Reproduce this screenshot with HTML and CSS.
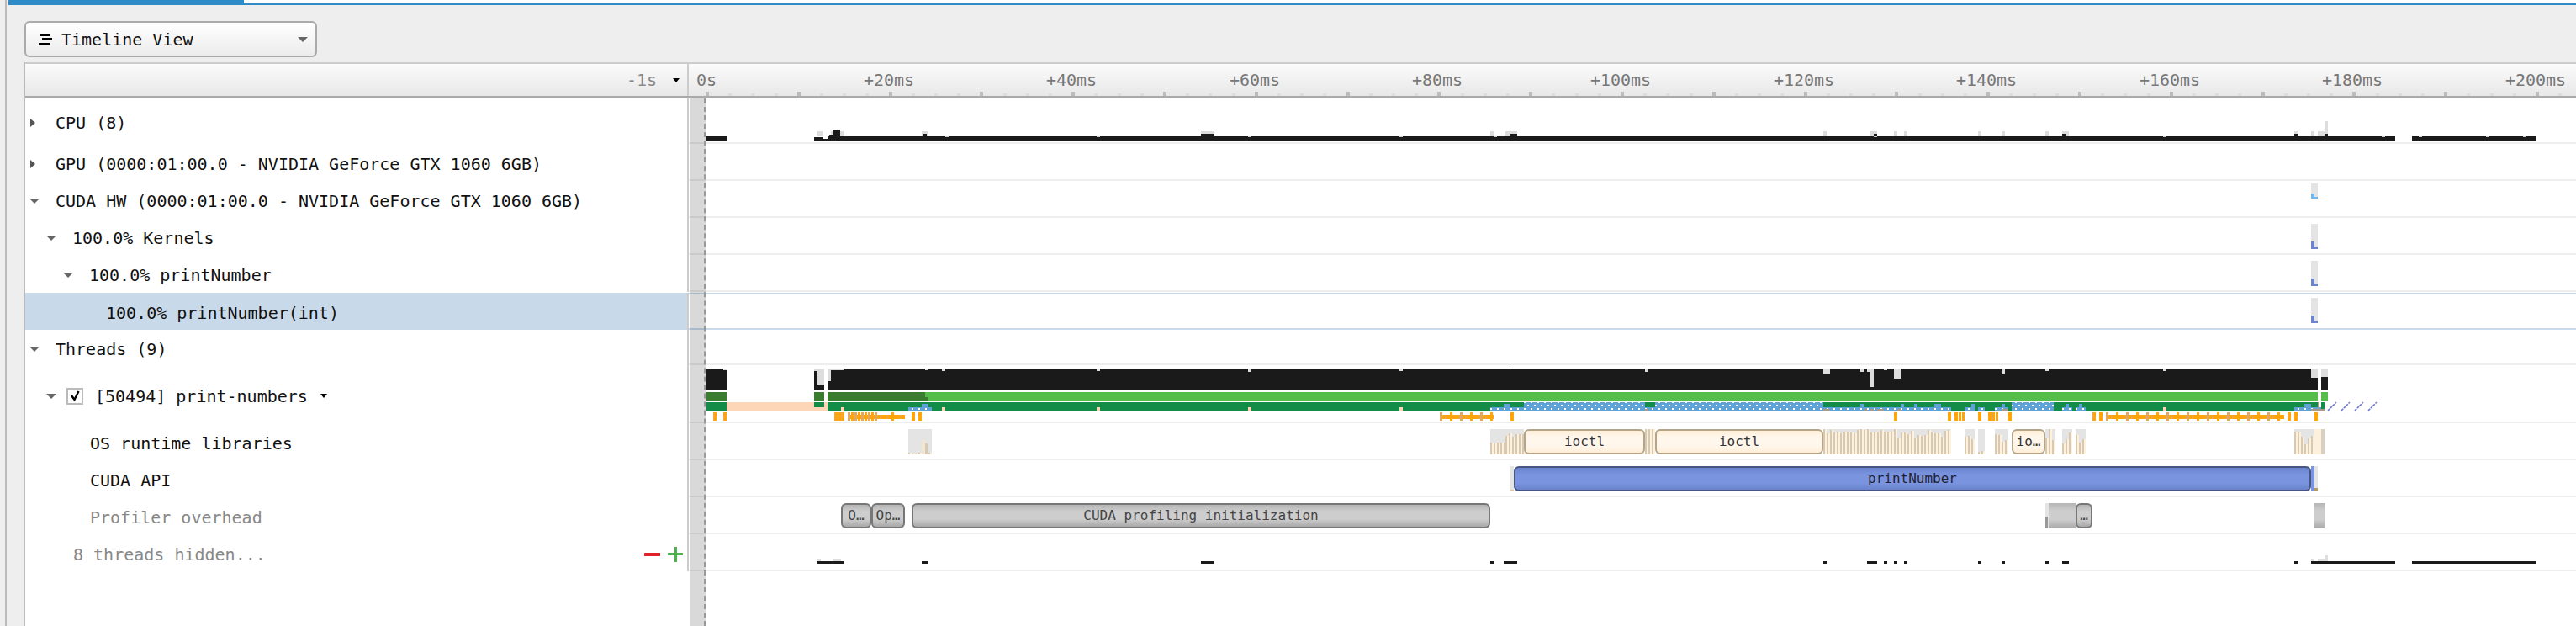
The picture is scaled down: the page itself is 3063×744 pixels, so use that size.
FILE: index.html
```html
<!DOCTYPE html>
<html lang="en">
  <head>
    <meta charset="UTF-8" />
    <title>Timeline View</title>
    <link rel="stylesheet" href="styles.css">
  </head>
  <body>
    <div class="app">
      <div class="progress"><div class="progress-fill"></div></div>

      <div class="toolbar">
        <button class="view-select">
          <svg class="view-icon" width="16" height="14" viewBox="0 0 16 14">
            <rect x="2" y="0" width="12" height="3" />
            <rect x="4" y="5" width="12" height="3" />
            <rect x="0" y="11" width="14" height="3" />
          </svg>
          <span>Timeline View</span>
          <i class="select-caret"></i>
        </button>
      </div>

      <div class="panel">
        <div class="panel-head">
          <div class="corner">
            <span>-1s</span>
            <i class="mini-caret"></i>
          </div>
          <div class="ruler" id="ruler"></div>
        </div>

        <div class="rows">
          <svg class="tracks" id="tracks" viewBox="819 117 2244 627" width="2244" height="627" shape-rendering="crispEdges">
            <defs>
              <pattern id="dots" width="8" height="8" patternUnits="userSpaceOnUse">
                <rect width="8" height="8" fill="#5fa3d6" />
                <rect x="0" y="1" width="2" height="2" fill="#fff" />
                <rect x="4" y="5" width="2" height="2" fill="#fff" />
              </pattern>
            </defs>
          </svg>

          <div class="row row-cpu">
            <div class="label lvl-0"><i class="caret-right"></i>CPU (8)</div>
            <div class="track"></div>
          </div>
          <div class="row">
            <div class="label lvl-0"><i class="caret-right"></i>GPU (0000:01:00.0 - NVIDIA GeForce GTX 1060 6GB)</div>
            <div class="track"></div>
          </div>
          <div class="row">
            <div class="label lvl-0"><i class="caret-down"></i>CUDA HW (0000:01:00.0 - NVIDIA GeForce GTX 1060 6GB)</div>
            <div class="track"></div>
          </div>
          <div class="row">
            <div class="label lvl-1"><i class="caret-down"></i>100.0% Kernels</div>
            <div class="track"></div>
          </div>
          <div class="row">
            <div class="label lvl-2"><i class="caret-down"></i>100.0% printNumber</div>
            <div class="track"></div>
          </div>
          <div class="row row-selected">
            <div class="label lvl-3">100.0% printNumber(int)</div>
            <div class="track"></div>
          </div>
          <div class="row row-threads">
            <div class="label lvl-0"><i class="caret-down"></i>Threads (9)</div>
            <div class="track"></div>
          </div>
          <div class="row row-thread">
            <div class="label lvl-1">
              <i class="caret-down"></i>
              <span class="checkbox">
                <svg width="15" height="15" viewBox="0 0 15 15"><path d="M3 7 L6.5 12 L11.5 2" fill="none" stroke="#000" stroke-width="2.4" /></svg>
              </span>
              <span>[50494] print-numbers</span>
              <i class="mini-caret thread-caret"></i>
            </div>
            <div class="track"></div>
          </div>
          <div class="row">
            <div class="label lvl-sub">OS runtime libraries</div>
            <div class="track" id="osTrack"></div>
          </div>
          <div class="row">
            <div class="label lvl-sub">CUDA API</div>
            <div class="track" id="apiTrack"></div>
          </div>
          <div class="row">
            <div class="label lvl-sub muted">Profiler overhead</div>
            <div class="track" id="profTrack"></div>
          </div>
          <div class="row">
            <div class="label lvl-hidden muted">
              <span>8 threads hidden...</span>
              <span class="hidden-btns">
                <svg width="19" height="4" viewBox="0 0 19 4"><rect width="19" height="4" fill="#e2222c" /></svg>
                <svg width="18" height="18" viewBox="0 0 18 18"><path d="M8 0h3v7h7v3h-7v8h-3v-8h-8v-3h8z" fill="#4cb34c" /></svg>
              </span>
            </div>
            <div class="track"></div>
          </div>
          <div class="zero-strip"></div>
        </div>
      </div>
    </div>
    <script src="script.js"></script>
  </body>
</html>
```

FILE: styles.css
```css
* {
  margin: 0;
  padding: 0;
  box-sizing: border-box;
}

body {
  font-family: "DejaVu Sans Mono", "Liberation Mono", monospace;
  font-size: 20px;
  color: #111;
  background: #eee;
  height: 744px;
  overflow: hidden;
}

.app {
  margin-left: 6px;
  height: 744px;
  border-left: 2px solid #bbb;
  display: flex;
  flex-direction: column;
}

.progress {
  height: 6px;
  margin-left: 2px;
  background: #fff;
  border-bottom: 2px solid #2e8bc7;
}

.progress-fill {
  width: 280px;
  height: 6px;
  background: #2e8bc7;
}

.toolbar {
  height: 68px;
  padding: 19px 0 0 21px;
}

.view-select {
  width: 348px;
  height: 43px;
  display: flex;
  align-items: center;
  padding-left: 15px;
  border: 2px solid #aaa;
  border-radius: 6px;
  background: linear-gradient(#fff, #ececec);
  font: inherit;
  color: #111;
}

.view-icon {
  margin-right: 11px;
  fill: #000;
}

.select-caret {
  width: 0;
  height: 0;
  margin-left: auto;
  margin-right: 9px;
  border-left: 6px solid transparent;
  border-right: 6px solid transparent;
  border-top: 6px solid #666;
}

.panel {
  flex: 1;
  margin-left: 21px;
  background: #fff;
  border-left: 1px solid #bbb;
  display: flex;
  flex-direction: column;
  overflow: hidden;
}

.panel-head {
  display: flex;
  height: 43px;
  border-top: 2px solid #ccc;
  border-bottom: 3px solid #aaa;
  background: linear-gradient(#fbfbfb, #e8e8e8);
}

.corner {
  width: 789px;
  border-right: 2px solid #ccc;
  display: flex;
  align-items: center;
  justify-content: flex-end;
  gap: 19px;
  padding-right: 9px;
  color: #888;
}

.ruler {
  flex: 1;
  position: relative;
}

.ruler-label {
  position: absolute;
  top: 7px;
  color: #777;
  transform: translateX(-50%);
}

.tick {
  position: absolute;
  bottom: 0;
  width: 4px;
  height: 3px;
  background: #ddd;
}

.tick-major {
  height: 5px;
  background: #bbb;
}

.rows {
  flex: 1;
  position: relative;
}

.tracks {
  position: absolute;
  top: 0;
  left: 789px;
}

.row {
  display: flex;
  height: 44px;
}

.row-cpu {
  height: 54px;
}

.row-selected {
  height: 45px;
  padding-top: 1px;
}

.row-threads {
  height: 42px;
}

.row-thread {
  height: 69px;
}

.label {
  width: 789px;
  flex-shrink: 0;
  display: flex;
  align-items: center;
  padding-top: 4px;
  border-right: 2px solid #ccc;
  white-space: nowrap;
  position: relative;
}

.lvl-0 { padding-left: 36px; }
.lvl-1 { padding-left: 56px; }
.lvl-2 { padding-left: 76px; }
.lvl-3 { padding-left: 96px; }
.lvl-sub { padding-left: 77px; }
.lvl-hidden { padding-left: 57px; justify-content: space-between; padding-right: 5px; }

.muted {
  color: #888;
}

.row-selected .label {
  background: #c8daea;
}

.track {
  flex: 1;
  position: relative;
  border-bottom: 2px solid #eee;
}

.row-selected .track {
  border-top: 2px solid #c8daea;
  border-bottom: 2px solid #c8daea;
}

.caret-right,
.caret-down {
  position: absolute;
  width: 0;
  height: 0;
}

.caret-right {
  margin-left: -30px;
  border-top: 5px solid transparent;
  border-bottom: 5px solid transparent;
  border-left: 6px solid #555;
}

.caret-down {
  margin-left: -31px;
  border-left: 6px solid transparent;
  border-right: 6px solid transparent;
  border-top: 6px solid #666;
}

.mini-caret {
  width: 0;
  height: 0;
  border-left: 4px solid transparent;
  border-right: 4px solid transparent;
  border-top: 5px solid #000;
}

.checkbox {
  width: 20px;
  height: 20px;
  margin-left: -7px;
  margin-right: 14px;
  border: 2px solid #bbb;
  background: #fff;
  display: flex;
  align-items: center;
  justify-content: center;
}

.thread-caret {
  margin-left: 15px;
}

.hidden-btns {
  display: flex;
  align-items: center;
  gap: 9px;
}

.zero-strip {
  position: absolute;
  top: 0;
  bottom: 0;
  left: 791px;
  width: 18px;
  background: rgba(0, 0, 0, 0.15);
  border-right: 2px dashed #999;
}

.box {
  position: absolute;
  top: 7px;
  height: 30px;
  border: 2px solid;
  border-radius: 6px;
  font-size: 16px;
  line-height: 25px;
  text-align: center;
  white-space: pre;
  overflow: hidden;
}

.box-plain {
  border: 0;
  border-radius: 0;
}

.box-os {
  border-color: #b3a48a;
  color: #333;
  background: linear-gradient(#ffeed6, #fff7ec 30%, #fff7ec 70%, #ffeed6);
}

.box-api {
  border-color: #475580;
  color: #223;
  background: linear-gradient(#6a82cc, #7a94df 30%, #7a94df 70%, #6a82cc);
}

.box-prof {
  border-color: #777;
  color: #444;
  background: linear-gradient(#b5b5b5, #cdcdcd 30%, #cdcdcd 65%, #a8a8a8);
}
```

FILE: script.js
```js
// timeline drawing, all x and y values are page pixels
const NS = "http://www.w3.org/2000/svg";
const svg = document.getElementById("tracks");
const START = 819;
const ZERO = 841;
const PER_MS = 10.88;

function rect(x, y, w, h, fill) {
  const r = document.createElementNS(NS, "rect");
  r.setAttribute("x", x);
  r.setAttribute("y", y);
  r.setAttribute("width", w);
  r.setAttribute("height", h);
  r.setAttribute("fill", fill);
  svg.appendChild(r);
}

function spans(list, y, h, fill) {
  list.forEach(([a, b]) => rect(a, y, b - a, h, fill));
}

function rnd(x) {
  return Math.abs(Math.sin(x * 12.9898) * 43758.5453) % 1;
}

// ruler
const ruler = document.getElementById("ruler");
for (let ms = 0; ms <= 205; ms += 2.5) {
  const t = document.createElement("div");
  t.className = ms % 10 === 0 ? "tick tick-major" : "tick";
  t.style.left = Math.round(ZERO + ms * PER_MS - 2 - START) + "px";
  ruler.appendChild(t);
}
for (let ms = 0; ms <= 200; ms += 20) {
  const l = document.createElement("div");
  l.className = "ruler-label";
  l.textContent = ms === 0 ? "0s" : "+" + ms + "ms";
  l.style.left = (ms === 0 ? 21 : Math.round(ZERO + ms * PER_MS - 2 - START)) + "px";
  ruler.appendChild(l);
}

// CPU row
const BLACK = "#1a1a1a";
const GREY = "#ddd";
spans([[972, 978], [988, 996], [999, 1003], [1096, 1104], [1428, 1444], [1772, 1776], [1789, 1804],
  [2168, 2172], [2224, 2232], [2252, 2256], [2264, 2268], [2352, 2356], [2380, 2384], [2432, 2436],
  [2452, 2460], [2728, 2732], [2748, 2752], [2756, 2764]], 156, 6, GREY);
rect(2764, 144, 4, 18, GREY);
spans([[840, 864], [968, 2848], [2868, 3016]], 162, 6, BLACK);
rect(968, 162, 10, 1, "#fff");
rect(978, 162, 7, 3, "#fff");
rect(990, 154, 9, 8, BLACK);
rect(986, 160, 4, 2, BLACK);
spans([[1098, 1102], [1428, 1444], [1796, 1804], [2228, 2232], [2452, 2456], [2728, 2732], [2764, 2768]], 159, 3, BLACK);
[1124, 1304, 1484, 1664, 1776, 2228, 2572, 2832, 2876, 2956, 3000].forEach((x) => rect(x, 162, 4, 1, "#ccc"));

// CUDA HW rows, one small sample near the end
rect(2748, 218, 8, 18, "#e4e4e4");
rect(2748, 230, 4, 6, "#72b6ee");
rect(2752, 234, 4, 2, "#72b6ee");
[266, 310, 354].forEach((y) => {
  rect(2748, y, 8, 30, "#e4e4e4");
  rect(2748, y + 21, 4, 9, "#6e84c8");
  rect(2752, y + 27, 4, 3, "#6e84c8");
});

// thread activity graph
spans([[840, 864], [968, 980], [984, 2756], [2760, 2768]], 438, 26, BLACK);
[[860, 4, 2], [840, 4, 1], [968, 12, 3], [972, 8, 19], [984, 4, 15], [988, 16, 2], [1100, 4, 2], [1120, 4, 3],
  [1304, 4, 3], [1484, 4, 4], [1664, 4, 3], [1792, 4, 1], [1956, 4, 4], [2168, 8, 6], [2212, 4, 4],
  [2220, 8, 4], [2224, 4, 22], [2240, 4, 2], [2252, 8, 12], [2380, 4, 7], [2432, 4, 3], [2572, 4, 3],
  [2748, 8, 11], [2760, 8, 10]].forEach(([x, w, h]) => rect(x, 438, w, h, GREY));

spans([[840, 864], [968, 980], [984, 1100]], 466, 10, "#3a7d2e");
spans([[1100, 2756], [2760, 2768]], 466, 10, "#55bd4a");
rect(1100, 472, 4, 4, "#3a7d2e");

// running state strip
const PEACH = "#fdd6b8";
rect(864, 478, 128, 10, PEACH);
spans([[840, 864], [984, 2756], [2760, 2764]], 478, 10, "#128c46");
rect(968, 478, 12, 6, "#128c46");
rect(984, 478, 8, 6, "#128c46");
spans([[1000, 1004], [1120, 1124], [1304, 1308], [1484, 1488], [1664, 1668], [1796, 1800], [2572, 2576], [2256, 2268]], 484, 4, PEACH);
spans([[1812, 1956], [1968, 2168], [2392, 2442]], 478, 10, "url(#dots)");
spans([[1080, 1108], [1772, 1812], [1956, 1968], [2168, 2320], [2336, 2348], [2352, 2360], [2372, 2388], [2452, 2464], [2468, 2480], [2728, 2760]], 484, 4, "url(#dots)");
spans([[1096, 1104], [1788, 1796], [2212, 2216], [2260, 2264], [2276, 2280], [2300, 2308], [2344, 2348], [2380, 2384], [2456, 2460], [2472, 2476], [2740, 2748]], 480, 4, "#5fa3d6");
spans([[1956, 1960], [2168, 2176], [2216, 2220], [2224, 2228], [2232, 2240], [2256, 2260], [2380, 2388], [2748, 2764]], 486, 2, "#a89a8a");
rect(2756, 478, 2, 8, "#a89a8a");

// slashes after the last sample
[2768, 2784, 2800, 2816].forEach((x) => {
  const l = document.createElementNS(NS, "path");
  l.setAttribute("d", "M" + x + " 488 L" + (x + 10) + " 478");
  l.setAttribute("stroke", "#6f78d8");
  l.setAttribute("stroke-width", "1.6");
  l.setAttribute("stroke-dasharray", "3 1");
  l.setAttribute("shape-rendering", "auto");
  svg.appendChild(l);
});

// orange ticks
const ORANGE = "#ffa50a";
const TAN = "#e0a860";
function dense(a, b, tallEvery) {
  rect(a, 493, b - a, 5, ORANGE);
  for (let x = a; x < b; x += 4) {
    const n = (x - a) / 4;
    if (n % tallEvery === 0) {
      rect(x, 490, 3, 10, n % (tallEvery * 2) === 0 ? TAN : ORANGE);
    } else if (n % 2 === 1) {
      rect(x + 2, 493, 1, 5, TAN);
    }
  }
}
spans([[848, 852], [860, 864], [992, 1004], [1084, 1088], [1092, 1096], [1796, 1800], [2252, 2256], [2316, 2320],
  [2324, 2328], [2329, 2332], [2333, 2336], [2352, 2356], [2364, 2368], [2369, 2372], [2373, 2376], [2388, 2392],
  [2488, 2492], [2496, 2500], [2720, 2724], [2728, 2732], [2752, 2756]], 490, 10, ORANGE);
[848, 860, 992, 996, 1000, 2488, 2720].forEach((x) => rect(x, 490, 1, 10, TAN));
dense(1008, 1040, 1);
dense(1040, 1076, 5);
dense(1712, 1776, 3);
dense(2504, 2716, 3);

// stack graph of the OS runtime row
function stripes(a, b, lo, hi) {
  rect(a, 510, b - a, 30, "#e4e4e4");
  for (let x = a; x < b; x += 4) {
    const h = Math.round(lo + (hi - lo) * rnd(x));
    rect(x, 540 - h, 2, h, "#d8c9b2");
    rect(x + 2, 540 - h, 2, h, "#fdf1de");
  }
}
stripes(1080, 1108, 1, 2);
rect(1096, 523, 4, 17, "#f2e6d2");
rect(1100, 527, 3, 13, "#d8c9b2");
stripes(1772, 1790, 2, 16);
stripes(1790, 1812, 20, 26);
stripes(1956, 1968, 30, 30);
stripes(2168, 2256, 24, 30);
stripes(2256, 2320, 20, 30);
stripes(2336, 2348, 16, 24);
stripes(2352, 2360, 1, 4);
stripes(2372, 2388, 6, 26);
stripes(2432, 2444, 10, 30);
stripes(2452, 2464, 10, 30);
stripes(2468, 2480, 12, 30);
stripes(2728, 2752, 12, 30);
rect(2752, 510, 12, 30, "#fdf1de");
rect(2760, 510, 4, 30, "#d8d0c0");

// small samples in the API and profiler rows
rect(1796, 554, 4, 30, "#e4e4e4");
rect(1796, 582, 4, 2, "#f0c090");
rect(2748, 554, 4, 30, "#7a94df");
rect(2752, 554, 4, 30, "#e4e4e4");
rect(2752, 580, 4, 4, "#b89a60");
rect(2432, 598, 4, 30, "#e4e4e4");
rect(2432, 614, 3, 14, "#999");

// bottom row of the last thread
spans([[972, 1004], [1096, 1104], [1428, 1444], [1772, 1776], [1788, 1804], [2168, 2172], [2220, 2232],
  [2240, 2244], [2252, 2256], [2264, 2268], [2352, 2356], [2380, 2384], [2432, 2436], [2452, 2460],
  [2728, 2732], [2748, 2848], [2868, 3016]], 667, 3, BLACK);
spans([[972, 976], [990, 1000], [2748, 2752], [2756, 2764]], 664, 3, GREY);
rect(2764, 660, 4, 7, GREY);

// flame blocks, an empty text gives a plain sample without border
const blocks = [
  ["osTrack", "box-os", 1812, 1956, "ioctl"],
  ["osTrack", "box-os", 1968, 2168, "ioctl"],
  ["osTrack", "box-os", 2392, 2432, "io…"],
  ["apiTrack", "box-api", 1800, 2748, "printNumber"],
  ["profTrack", "box-prof", 1000, 1036, "O…"],
  ["profTrack", "box-prof", 1036, 1076, "Op…"],
  ["profTrack", "box-prof", 1084, 1772, "CUDA profiling initialization"],
  ["profTrack", "box-prof", 2468, 2488, "…"],
  ["profTrack", "box-prof box-plain", 2436, 2452, ""],
  ["profTrack", "box-prof box-plain", 2452, 2468, ""],
  ["profTrack", "box-prof box-plain", 2752, 2764, ""],
];
blocks.forEach(([track, cls, a, b, text]) => {
  const box = document.createElement("div");
  box.className = "box " + cls;
  box.style.left = a - START + "px";
  box.style.width = b - a + "px";
  box.textContent = text;
  document.getElementById(track).appendChild(box);
});
```
